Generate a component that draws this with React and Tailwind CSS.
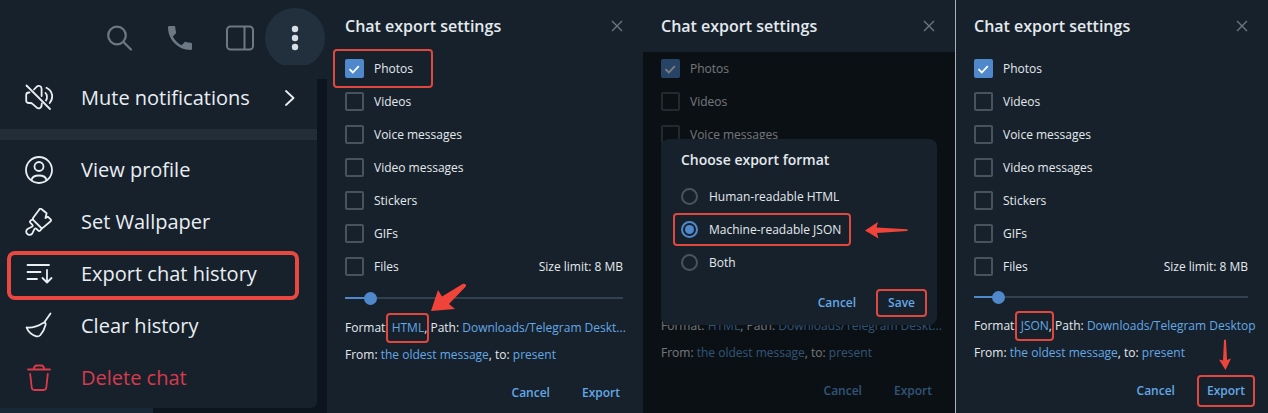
import { useState } from "react";

const MEDIA_TYPES = [
  "Photos",
  "Videos",
  "Voice messages",
  "Video messages",
  "Stickers",
  "GIFs",
  "Files",
];

const FORMATS = ["Human-readable HTML", "Machine-readable JSON", "Both"];

/* ICONS */

function LineIcon({ children }) {
  return (
    <svg
      viewBox="0 0 28 28"
      className="size-7 shrink-0"
      fill="none"
      stroke="currentColor"
      strokeWidth="1.8"
      strokeLinecap="round"
      strokeLinejoin="round"
      aria-hidden="true"
    >
      {children}
    </svg>
  );
}

const muteIcon = (
  <LineIcon>
    <path d="M1.5 1.5l23.5 23.5" />
    <path d="M4.5 8.5H4C2.200 8.500 1.200 9.500 1.200 11v5.500c0 1.500 1 2.500 2.800 2.500h1.500c.8 0 1.400.2 2 .8l4 3.600c1.600 1.500 4.500 1.300 5-1.400l.3-2.500" />
    <path d="M9 5.500l2.600-2.700C13.300 1 16.600 1.800 16.600 4.800V12" />
    <path d="M20.500 9c1.800 2 1.800 5 .5 7.500" />
    <path d="M21.500 3.800c6 3 7.500 10 3.200 15.200" />
  </LineIcon>
);

const profileIcon = (
  <LineIcon>
    <circle cx="14" cy="14" r="13" />
    <circle cx="14" cy="10.500" r="4.500" />
    <path d="M6.500 24.200c.5-3 3.500-4.700 7.500-4.700s7 1.700 7.500 4.700" />
  </LineIcon>
);

const brushIcon = (
  <LineIcon>
    <path d="M14.500 1.200L8.200 9.800c-.6.9-.5 1.600.2 2.300l7.400 7.400c.8.8 1.500.8 2.300.1l7.500-6.400c.7-.6.7-1.200.1-1.800l-2.900-2.700-2.300 1.300 1.100-4.800-5.200-4.200c-.7-.6-1.300-.5-1.900.2z" />
    <path d="M8 11.200l-2.300 1.300c-1 .8-1 1.600-.2 2.400l1.700 1.700c.9 1 .7 1.700-.3 2.200l-4 1.900a3.300 3.300 0 1 0 4.500 4.500l2-4c.5-1 1.300-1.100 2.100-.3l1.700 1.600c.8.8 1.600.7 2.300-.2l1.800-2.400" />
  </LineIcon>
);

const exportIcon = (
  <LineIcon>
    <path d="M2.500 5H24M2.500 12h13M2.500 19h9.500M22 10v12M17.500 18l4.500 4.500 4.500-4.500" />
  </LineIcon>
);

const broomIcon = (
  <LineIcon>
    <path d="M25.500 1.500l-6.300 9" />
    <path d="M1.500 15.500c6.500.5 12-1.500 16.500-4.500 1.800-1.100 3 0 2.600 1.800-1 4-3 7.700-5.200 10.200-1.200 1.300-2.300 1.800-4 1.300-4.200-1.200-8-4-9.900-8.800z" />
  </LineIcon>
);

const trashIcon = (
  <LineIcon>
    <path d="M3 5.500h22M8.800 5.200c.2-2.400 1.200-3.700 3-3.700h4.400c1.800 0 2.800 1.300 3 3.700" />
    <path d="M5.200 10l1.500 13.500c.2 1.700 1 2.500 2.700 2.500h9.200c1.700 0 2.500-.8 2.700-2.500L22.800 10" />
  </LineIcon>
);

const MENU_ITEMS = [
  { label: "View profile", icon: profileIcon },
  { label: "Set Wallpaper", icon: brushIcon },
  { label: "Export chat history", icon: exportIcon, marked: true },
  { label: "Clear history", icon: broomIcon },
  { label: "Delete chat", icon: trashIcon, danger: true },
];

/* CHAT MENU */

function ChatMenu() {
  return (
    <section className="flex flex-col bg-[#0c151e]">
      <header className="flex h-[65px] justify-end overflow-hidden bg-[#17212b] pt-2 pr-0.5 text-[#6c7883]">
        <div className="flex gap-2.5">
          <button aria-label="Search" className="flex h-[60px] w-[50px] items-center justify-center">
            <svg viewBox="0 0 26 26" className="size-[26px]" fill="none" stroke="currentColor" strokeWidth="2.200" strokeLinecap="round">
              <circle cx="10" cy="10.500" r="8.800" />
              <path d="M16.500 17l7.500 7.500" />
            </svg>
          </button>
          <button aria-label="Call" className="flex h-[60px] w-[50px] items-center justify-center">
            <svg viewBox="0 0 24 24" className="size-8" fill="currentColor">
              <path d="M6.620 10.790c1.440 2.830 3.760 5.140 6.590 6.590l2.200-2.200c.27-.27.67-.36 1.020-.24 1.120.37 2.330.57 3.570.57.55 0 1 .45 1 1V20c0 .55-.45 1-1 1-9.390 0-17-7.610-17-17 0-.55.45-1 1-1h3.500c.55 0 1 .45 1 1 0 1.250.2 2.450.57 3.570.11.35.03.74-.25 1.020l-2.200 2.200z" />
            </svg>
          </button>
          <button aria-label="Toggle side panel" className="flex h-[60px] w-[50px] items-center justify-center">
            <svg viewBox="0 0 28 26" className="h-[26px] w-7" fill="none" stroke="currentColor" strokeWidth="2">
              <rect x="1" y="1.500" width="26" height="23" rx="3.500" />
              <path d="M18.500 1.500v23" />
            </svg>
          </button>
        </div>
        <button aria-label="More" className="flex size-[60px] items-center justify-center rounded-full bg-[#222f3d] text-[#d8dee5]">
          <svg viewBox="0 0 8 26" className="h-[26px] w-2" fill="currentColor">
            <circle cx="4" cy="4" r="3.200" />
            <circle cx="4" cy="13" r="3.200" />
            <circle cx="4" cy="22" r="3.200" />
          </svg>
        </button>
      </header>

      <div className="flex">
        <nav className="flex-1 rounded-br-md bg-[#17212b] text-xl text-[#e9eef3]">
          <button className="flex h-16 w-full items-center pt-0.5 pr-5 pl-[25px] text-left">
            {muteIcon}
            <span className="ml-7 flex-1">Mute notifications</span>
            <svg viewBox="0 0 12 18" className="h-[18px] w-3" fill="none" stroke="currentColor" strokeWidth="1.800" strokeLinecap="round" strokeLinejoin="round" aria-hidden="true">
              <path d="M1 2l7.500 7L1 16" />
            </svg>
          </button>
          <div className="h-[11px] bg-[#222d37]" />
          <ul className="py-1">
            {MENU_ITEMS.map((item) => (
              <li key={item.label} className="relative">
                <button
                  className={`flex h-[52px] w-full items-center pl-[25px] text-left ${
                    item.danger ? "text-[#d93a4c]" : ""
                  }`}
                >
                  {item.icon}
                  <span className="ml-7">{item.label}</span>
                </button>
                {item.marked && (
                  <span className="pointer-events-none absolute top-[3px] right-[18px] bottom-0 left-[7px] rounded-lg border-4 border-[#e8483f]" />
                )}
              </li>
            ))}
          </ul>
        </nav>
        <div className="w-2.5">
          <div className="h-3.5 bg-[#17212b]" />
        </div>
      </div>
      <div className="h-[5px] w-[153px] bg-[#182837]" />
    </section>
  );
}

/* EXPORT SETTINGS */

function Mark({ className }) {
  return (
    <span
      className={`pointer-events-none absolute rounded border-2 border-[#e0473e] ${className}`}
    />
  );
}

function MediaRow({ label, defaultChecked, marked, note }) {
  return (
    <div className="flex h-[33px] items-center justify-between">
      <label className="relative flex items-center gap-2.5">
        <span className="grid">
          <input
            type="checkbox"
            defaultChecked={defaultChecked}
            className="peer col-start-1 row-start-1 size-[19px] appearance-none rounded-[2px] border-2 border-[#47535f] checked:border-[#4f89cc] checked:bg-[#4f89cc]"
          />
          <svg
            viewBox="0 0 19 19"
            className="pointer-events-none col-start-1 row-start-1 hidden size-[19px] peer-checked:block"
            fill="none"
            stroke="white"
            strokeWidth="1.800"
            aria-hidden="true"
          >
            <path d="M4.500 10.200l3.300 3.300 6-6.300" />
          </svg>
        </span>
        {label}
        {marked && <Mark className="-top-2.5 -right-5 -bottom-2.5 -left-3" />}
      </label>
      {note && <span>{note}</span>}
    </div>
  );
}

function ExportSettings({
  format,
  path,
  markPhotos,
  markExport,
  markFormat,
  arrow,
  sliderHeight = "h-7",
  className = "",
  children,
}) {
  const [limit, setLimit] = useState(7);

  return (
    <section
      className={`relative min-w-0 bg-[#17212b] pr-5 pl-[18px] text-xs whitespace-nowrap text-[#e4e9ee] ${className}`}
    >
      <header className="flex h-[52px] items-center justify-between">
        <h2 className="text-base font-semibold">Chat export settings</h2>
        <button aria-label="Close" className="text-[#6b7680]">
          <svg viewBox="0 0 12 12" className="size-3" stroke="currentColor" strokeWidth="1.400">
            <path d="M1 1l10 10M11 1L1 11" />
          </svg>
        </button>
      </header>

      {MEDIA_TYPES.map((type) => (
        <MediaRow
          key={type}
          label={type}
          defaultChecked={type === "Photos"}
          marked={markPhotos && type === "Photos"}
          note={type === "Files" ? "Size limit: 8 MB" : null}
        />
      ))}

      <div className={`flex items-center ${sliderHeight}`}>
        <input
          type="range"
          aria-label="Size limit"
          value={limit}
          onChange={(e) => setLimit(Number(e.target.value))}
          style={{
            backgroundImage: `linear-gradient(to right, #4f89cc ${limit + 2}%, #33414e ${limit + 2}%)`,
          }}
          className="h-0.5 w-full appearance-none [&::-webkit-slider-thumb]:size-[13px] [&::-webkit-slider-thumb]:appearance-none [&::-webkit-slider-thumb]:rounded-full [&::-webkit-slider-thumb]:bg-[#4f89cc]"
        />
      </div>

      <p className="h-[30px] leading-[30px]">
        Format:{" "}
        <span className="relative inline-block">
          <a href="#format" className="text-[#64a8e6]">
            {format}
          </a>
          ,{markFormat && <Mark className="-right-0.5 -left-1.5 inset-y-0" />}
          {arrow}
        </span>{" "}
        Path:{" "}
        <a href="#path" className="text-[#64a8e6]">
          {path}
        </a>
      </p>
      <p className="h-6 leading-6">
        From:{" "}
        <a href="#from" className="text-[#64a8e6]">
          the oldest message
        </a>
        , to:{" "}
        <a href="#to" className="text-[#64a8e6]">
          present
        </a>
      </p>

      <footer className="mt-2 flex h-9 items-center justify-end gap-8 pr-[3px] font-semibold text-[#64a8e6]">
        <button>Cancel</button>
        <button className="relative">
          Export
          {markExport && (
            <>
              <Mark className="-inset-x-2.5 -inset-y-2" />
              <svg viewBox="0 0 12 32" className="pointer-events-none absolute bottom-full left-3 mb-3 h-8 w-3" fill="#f0443b" aria-hidden="true">
                <path d="M5 1q1-1 2 0l1 20 4-1.500L6.500 31 0 20.500l4 1z" />
              </svg>
            </>
          )}
        </button>
      </footer>

      {children}
    </section>
  );
}

function FormatDialog() {
  const [selected, setSelected] = useState("Machine-readable JSON");

  return (
    <div className="absolute inset-x-0 top-[52px] bottom-0 bg-black/50">
      <div
        role="dialog"
        aria-label="Choose export format"
        className="mx-[18px] mt-[87px] h-[186px] rounded-lg bg-[#17212b] px-5"
      >
        <h3 className="flex h-[41px] items-center text-sm font-semibold">
          Choose export format
        </h3>
        {FORMATS.map((name) => (
          <div key={name} className="flex h-[33px] items-center">
            <label className="relative flex items-center gap-[11px]">
              <input
                type="radio"
                name="format"
                checked={selected === name}
                onChange={() => setSelected(name)}
                className="size-[17px] appearance-none rounded-full border-2 border-[#47535f] checked:border-[#4f89cc] checked:bg-[#4f89cc] checked:bg-clip-content checked:p-0.5"
              />
              {name}
              {selected === name && (
                <>
                  <Mark className="-inset-y-2 -right-2.5 -left-2" />
                  <svg viewBox="0 0 44 18" className="pointer-events-none absolute left-full ml-6 h-[18px] w-11" fill="#f0443b" aria-hidden="true">
                    <path d="M0 9.500L13 1l-1.500 5.500L42 8.300q2 .9 0 1.800L12 12l1.500 5.500z" />
                  </svg>
                </>
              )}
            </label>
          </div>
        ))}
        <div className="mt-1.5 flex h-[35px] items-center justify-end gap-8 pr-0.5 font-semibold text-[#64a8e6]">
          <button>Cancel</button>
          <button className="relative">
            Save
            <Mark className="-inset-x-3 -inset-y-1.5" />
          </button>
        </div>
      </div>
    </div>
  );
}

export default function App() {
  return (
    <main className="grid grid-cols-[327fr_316fr_313fr_312fr] bg-[#17212b] font-['Open_Sans',sans-serif]">
      <ChatMenu />
      <ExportSettings
        format="HTML"
        path="Downloads/Telegram Deskt..."
        sliderHeight="h-[30px]"
        markPhotos
        markFormat
        arrow={
          <svg viewBox="0 0 36 30" className="pointer-events-none absolute bottom-full left-full ml-1 h-[30px] w-9" fill="#f0443b" aria-hidden="true">
            <path d="M0 28L7 7l4 6.500L32 .8q3.500-.6 3 2.400L18 21l6 5z" />
          </svg>
        }
      />
      <ExportSettings
        format="HTML"
        path="Downloads/Telegram Deskt..."
        className="border-r border-[#a9b2ba]"
      >
        <FormatDialog />
      </ExportSettings>
      <ExportSettings
        format="JSON"
        path="Downloads/Telegram Desktop"
        markFormat
        markExport
      />
    </main>
  );
}
